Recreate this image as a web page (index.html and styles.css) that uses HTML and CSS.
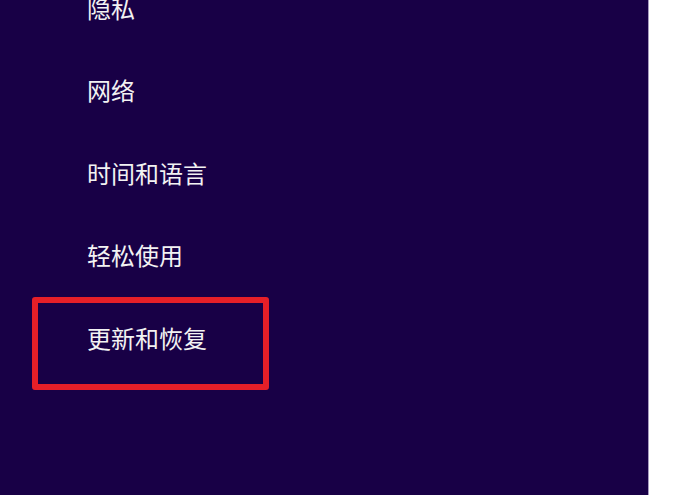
FILE: index.html
```html
<!DOCTYPE html>
<html lang="zh-CN">

<head>
    <meta charset="UTF-8">
    <title>设置</title>
    <link rel="stylesheet" href="styles.css">
</head>

<body>
    <div class="screen">
        <nav class="side">
            <ul class="menu">
                <li class="item">隐私</li>
                <li class="item">网络</li>
                <li class="item">时间和语言</li>
                <li class="item">轻松使用</li>
                <li class="item item-marked">更新和恢复</li>
            </ul>
        </nav>
        <div class="rest"></div>
    </div>
</body>

</html>
```

FILE: styles.css
```css
html,
body {
    margin: 0;
    height: 100%;
    overflow: hidden;
}

body {
    font-family: "Noto Sans CJK SC", "Noto Sans", sans-serif;
    background: #fff;
}

.screen {
    display: flex;
    height: 495px;
}

.side {
    width: 648px;
    background: #180046;
    border-right: 1px solid #a89cc0;
    overflow: hidden;
}

.rest {
    flex: 1;
    background: #fff;
}

.menu {
    list-style: none;
    margin: -34px 0 0 0;
    padding: 0 0 0 32px;
}

.item {
    display: flex;
    align-items: center;
    height: 82.5px;
    padding-left: 55px;
    color: #f2f2f2;
    font-size: 24px;
}

.item-marked {
    box-sizing: border-box;
    width: 237px;
    height: 93px;
    margin-top: 1px;
    padding: 0 0 12px 49px;
    border: 6px solid #e61f28;
    border-radius: 3px;
}
```
